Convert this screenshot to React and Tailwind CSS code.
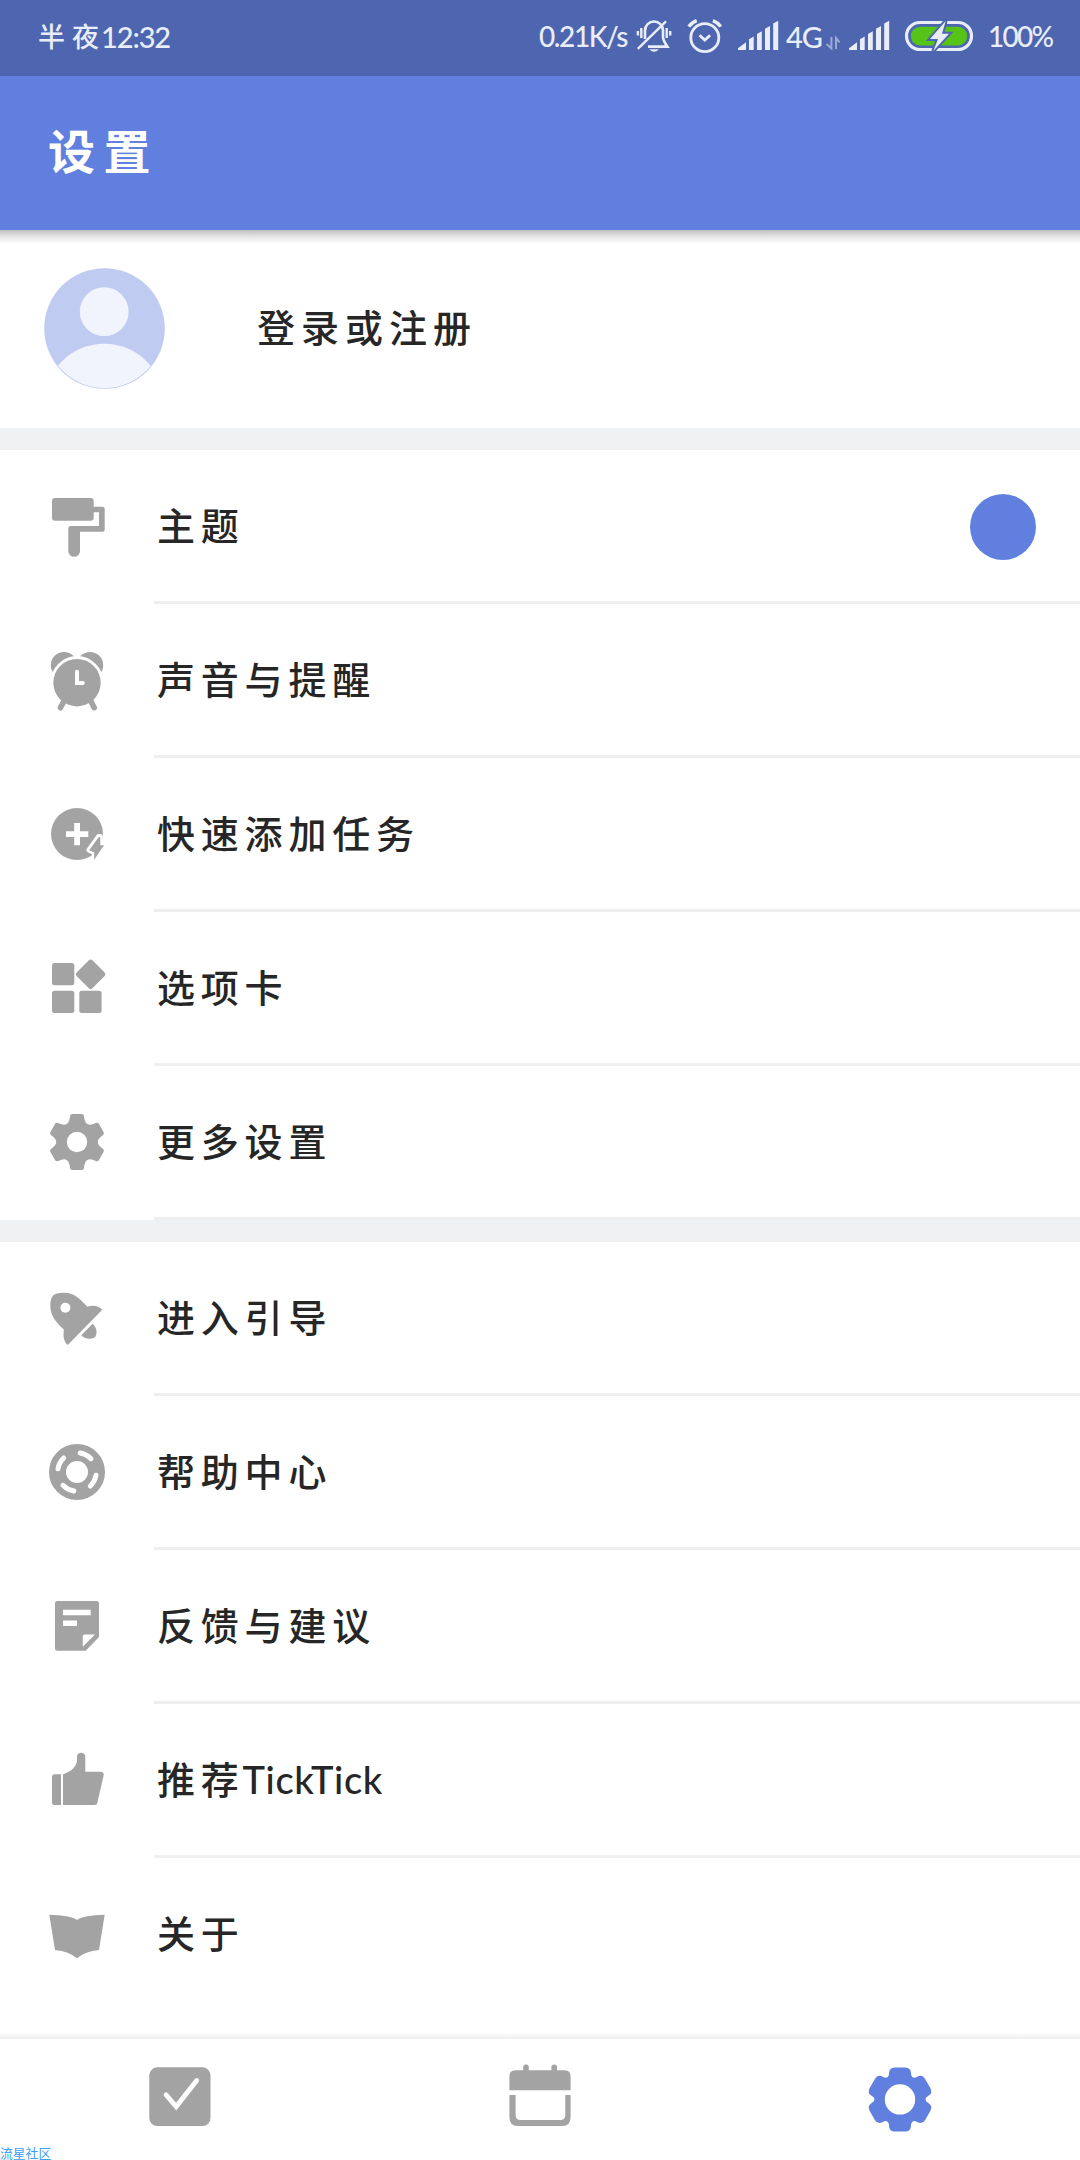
import { clsx } from 'clsx';

const SECTOR_ANGLES = [0, 60, 120, 180, 240, 300];

const RollerIcon = () => (
  <>
    <rect x="8" y="6" width="41.7" height="22.7" rx="3" />
    <path d="M49 14.7h9.7q2 0 2 2v21q0 2-2 2H36V59a5.8 5.8 0 0 1-11.7 0V36.2q0-2.2 2.2-2.2H55V20.3h-6z" />
  </>
);

const ClockIcon = () => (
  <>
    <circle cx="20" cy="19.2" r="13.2" />
    <circle cx="46" cy="19.2" r="13.2" />
    <circle cx="33" cy="36.7" r="26.6" fill="#fff" />
    <circle cx="33" cy="36.7" r="23.7" />
    <path d="M20.3 54.7L16.5 61.7M46.7 54.7L50.2 61.7" stroke="currentColor" strokeWidth="5.6" strokeLinecap="round" />
    <path d="M33 25.8V37h5.8" fill="none" stroke="#fff" strokeWidth="4" strokeLinecap="round" />
  </>
);

const QuickAddIcon = () => (
  <>
    <circle cx="33" cy="34" r="26" />
    <path d="M22 34.1h22.3M33.1 23v22.3" stroke="#fff" strokeWidth="5.8" />
    <path d="M54.7 36.5L45 50l5.3 2.5V60L60 45.3h-3.7v-8.8z" fill="#fff" stroke="#fff" strokeWidth="5" strokeLinejoin="round" />
    <path d="M54.8 37L45.2 50.2l5 2.3v7.2L60 45.3h-3.7v-8z" />
  </>
);

const TabsIcon = () => (
  <>
    <rect x="8" y="9" width="22.3" height="22.3" rx="2.5" />
    <rect x="8" y="36.7" width="22.3" height="22.3" rx="2.5" />
    <rect x="35.3" y="36.7" width="22.3" height="22.3" rx="2.5" />
    <rect x="35.5" y="9.2" width="22.3" height="22.3" rx="2.5" transform="rotate(45 46.7 20.3)" />
  </>
);

const GearIcon = () => (
  <g transform="translate(33 34)">
    {SECTOR_ANGLES.map((a) => (
      <path
        key={a}
        transform={`rotate(${a})`}
        d="M0 0L-10.35-17.9Q-7.6-19.5-7-25.8Q-6.7-28-4.8-28H4.8Q6.7-28 7-25.8Q7.6-19.5 10.35-17.9z"
      />
    ))}
    <circle r="15.3" fill="none" stroke="currentColor" strokeWidth="10.4" />
    <circle r="10.2" fill="#fff" />
  </g>
);

const RocketIcon = () => (
  <>
    <path d="M43.3 22.7C49 20.7 55 22 58.3 25.7L23.7 61C19.5 57 18.8 52 20 45.8C12 38 6.3 32 6.3 21.5C6.5 12 9.5 9 19 8.8C31 8.5 36.5 15.8 43.3 22.7z" />
    <circle cx="21.4" cy="23.8" r="5" fill="#fff" />
    <path d="M48.5 39.7C53 44 53.7 48.5 51 53.3C46.5 55.8 41 55.2 37.3 51.2z" />
  </>
);

const LifebuoyIcon = () => (
  <g transform="translate(33 34)">
    <circle r="19.5" fill="none" stroke="currentColor" strokeWidth="17" />
    {[0, 90, 180, 270].map((a) => (
      <path
        key={a}
        transform={`rotate(${a})`}
        d="M3.2-19A19.3 19.3 0 0 1 14-13.3"
        fill="none"
        stroke="#fff"
        strokeWidth="5"
        strokeLinecap="round"
      />
    ))}
  </g>
);

const NoteIcon = () => (
  <>
    <path d="M13.5 9h39q2.5 0 2.5 2.5V45L41.7 58.7H13.5q-2.5 0-2.5-2.5V11.5Q11 9 13.5 9z" />
    <path d="M19 17.7h27.7v5.5H19zM19 28.4h14V34H19zM38.7 54.7V44.5q0-2.1 2-2.1H51z" fill="#fff" />
  </>
);

const ThumbIcon = () => (
  <>
    <path d="M10.5 28.3H17V59h-6.5Q8 59 8 56.5V30.8q0-2.5 2.5-2.5z" />
    <path d="M19 59V28.5C26 25.5 33 22 33 13V10.2a4.2 4.2 0 0 1 8.3 0V25.7H56.5q3.6 0 3.2 3.3L53.3 57q-.5 2-2.5 2z" />
  </>
);

const BookIcon = () => (
  <path d="M5.3 14.7Q26 15 33 20Q40 15 60.7 14.7L55 50Q41 51.5 33 58.3Q25 51.5 11 50z" />
);

const NavCheckIcon = () => (
  <>
    <rect x="9.3" y="8.3" width="61.2" height="58.7" rx="8" />
    <path d="M26 35.7L36.2 47.6L56.7 21.5" fill="none" stroke="#fff" strokeWidth="4.8" strokeLinecap="round" />
  </>
);

const NavCalendarIcon = () => (
  <>
    <path d="M15.5 11.2h7.7V8.2a2.8 2.8 0 0 1 5.6 0v3h22.6V8.2a2.8 2.8 0 0 1 5.6 0v3h7.5q6.1 0 6.1 6v14H9.4v-14q0-6 6.1-6z" />
    <path d="M9.4 36h6.2v20q0 5 5 5h39.7q5 0 5-5V36h5.3v22q0 9-8.5 9H17.9q-8.5 0-8.5-9z" />
  </>
);

const NavGearIcon = () => (
  <g transform="translate(40 40.4)">
    {SECTOR_ANGLES.map((a) => (
      <path
        key={a}
        transform={`rotate(${a})`}
        d="M0 0L-12.75-22.1Q-11-23-11-26Q-11-32-5.2-32H5.2Q11-32 11-26Q11-23 12.75-22.1z"
      />
    ))}
    <circle r="20" fill="none" stroke="currentColor" strokeWidth="10.4" />
    <circle r="15.2" fill="#fff" />
  </g>
);

const SignalIcon = ({ className }) => (
  <svg className={clsx('shrink-0', className)} width="43" height="44" viewBox="0 0 43 44" fill="currentColor">
    <path d="M1 34.3L9 28.3V36H1.6Q1 36 1 35.4zM12 25.2l4.7-2.6V36H12zM20 20l4.8-2.7V36H20zM28 14.8l5-2.7V36h-5zM36.2 9.5l5-2.7V36h-5z" />
  </svg>
);

const StatusBar = () => (
  <div className="h-[76px] shrink-0 flex items-center bg-[#4e66b0] text-[#e9edf8] text-[29px] leading-none pl-[38px] pb-1">
    <div className="flex items-center w-[501px] font-medium">
      <span className="text-[27px] tracking-[7px]">半夜</span>
      <span className="-ml-[5px] tracking-[-1.1px]">12:32</span>
    </div>

    <span className="w-[96px] text-[28px] tracking-[-1.4px] font-medium">0.21K/s</span>

    {/* Muted bell */}
    <svg className="shrink-0" width="38" height="44" viewBox="0 0 38 44" fill="none" stroke="currentColor" strokeWidth="2.6">
      <path d="M10 25V16.5A9 9 0 0 1 28 16.5V23.5Q28.5 27 32.3 32.6H13" />
      <path d="M2.8 34.8L31 7.3M31.7 14v10M35.2 17v4.5M6.3 14v10M2.9 17v4.5" strokeWidth="2.4" />
      <path d="M14.3 35.2h9.6q-4.8 5-9.6 0z" fill="currentColor" stroke="none" />
    </svg>

    {/* Alarm */}
    <svg className="shrink-0 ml-3" width="40" height="44" viewBox="0 0 40 44" fill="none" stroke="currentColor" strokeWidth="2.8">
      <circle cx="19.8" cy="23.7" r="14" />
      <path d="M14.5 21.2l5.3 4.9 5.3-4.9" />
      <path d="M3.8 12.6Q6.5 8.5 11.7 6.6M27.9 6.6Q33 8.5 35.8 12.6" strokeWidth="3.4" />
    </svg>

    <SignalIcon className="ml-3" />
    <span className="ml-[6px] w-[39px] tracking-[-1px] font-medium">4G</span>
    <svg className="shrink-0 opacity-50" width="16" height="44" viewBox="0 0 16 44" fill="none" stroke="currentColor" strokeWidth="2">
      <path d="M6.4 23v11.5L1.6 30M11 35V24l3.6 4.4" />
    </svg>
    <SignalIcon className="ml-[7px]" />

    {/* Charging battery */}
    <svg className="shrink-0 ml-[13px]" width="70" height="44" viewBox="0 0 70 44" fill="currentColor">
      <rect x="2.5" y="8.5" width="65" height="27" rx="13.5" fill="none" stroke="currentColor" strokeWidth="3.2" />
      <rect x="6.8" y="12.8" width="56.4" height="18.6" rx="9.3" fill="#56c416" />
      <path d="M41.7 7L26 25h8l-4.7 12L45 19.7h-7z" fill="#4e66b0" stroke="#4e66b0" strokeWidth="4" />
      <path d="M41.7 7L26 25h8l-4.7 12L45 19.7h-7z" />
    </svg>

    <span className="ml-[14px] text-[28px] tracking-[-1.7px] font-medium">100%</span>
  </div>
);

const accountRows = [
  { label: '主题', Icon: RollerIcon, swatch: true },
  { label: '声音与提醒', Icon: ClockIcon },
  { label: '快速添加任务', Icon: QuickAddIcon },
  { label: '选项卡', Icon: TabsIcon },
  { label: '更多设置', Icon: GearIcon },
];

const helpRows = [
  { label: '进入引导', Icon: RocketIcon },
  { label: '帮助中心', Icon: LifebuoyIcon },
  { label: '反馈与建议', Icon: NoteIcon },
  { label: '推荐', latin: 'TickTick', Icon: ThumbIcon },
  { label: '关于', Icon: BookIcon, last: true },
];

const SettingRow = ({ label, latin, Icon, swatch, last }) => (
  <div className="h-[154px] flex pl-11">
    <div className="w-[110px] h-[151px] flex items-center shrink-0">
      <svg width="66" height="67" viewBox="0 0 66 67" fill="currentColor" className="text-[#a3a3a3]">
        <Icon />
      </svg>
    </div>
    <div
      className={clsx(
        'flex-1 flex items-center justify-between border-b-[3px] pl-[3px] pr-11',
        last ? 'border-transparent' : 'border-[#efefef]'
      )}
    >
      <div className="flex items-center text-[38px] leading-none font-medium text-[#262626] pb-px">
        <span className="tracking-[5.8px]">{label}</span>
        {latin && <span className="-ml-[2px] tracking-[0.6px]">{latin}</span>}
      </div>
      {swatch && <div className="mt-[2px] size-[66px] rounded-full bg-[#617fde]" />}
    </div>
  </div>
);

const navItems = [
  { key: 'tasks', Icon: NavCheckIcon },
  { key: 'calendar', Icon: NavCalendarIcon },
  { key: 'settings', Icon: NavGearIcon, active: true },
];

export default function App() {
  return (
    <div className="relative w-[1080px] h-[2160px] flex flex-col overflow-hidden bg-white font-['Lato','Noto_Sans_CJK_SC',sans-serif]">
      <StatusBar />

      <header className="relative h-[154px] shrink-0 flex items-center bg-[#617fde] pl-[48px] pb-[4px]">
        <h1 className="text-[47px] leading-none tracking-[8.5px] font-bold text-white">设置</h1>
        <div className="absolute left-0 top-full w-full h-[14px] bg-linear-to-b from-[#c0c0c0] via-[#e6e6e6] to-white" />
      </header>

      {/* Account */}
      <div className="h-[198px] shrink-0 flex items-center pl-11 pb-px">
        <svg width="121" height="121" viewBox="0 0 122 122">
          <clipPath id="avatar">
            <circle cx="61" cy="61" r="60" />
          </clipPath>
          <circle cx="61" cy="61" r="60.8" fill="#c0cbf2" />
          <g clipPath="url(#avatar)" fill="#f1f4fd">
            <circle cx="60.7" cy="44" r="24.6" />
            <circle cx="60.7" cy="137" r="60.6" />
          </g>
        </svg>
        <span className="ml-[92px] pb-[3px] text-[38px] leading-none tracking-[6px] font-medium text-[#262626]">登录或注册</span>
      </div>

      <div className="h-[22px] shrink-0 bg-[#f0f1f3]" />
      {accountRows.map((row) => (
        <SettingRow key={row.label} {...row} />
      ))}

      <div className="h-[22px] shrink-0 bg-[#f0f1f3]" />
      {helpRows.map((row) => (
        <SettingRow key={row.label} {...row} />
      ))}

      <div className="mt-auto h-[7px] shrink-0 bg-linear-to-b from-white to-[#eeeeee]" />
      <nav className="h-[121px] shrink-0 grid grid-cols-3">
        {navItems.map(({ key, Icon, active }) => (
          <button key={key} className="flex items-center justify-center">
            <svg
              width="80"
              height="81"
              viewBox="0 0 80 81"
              fill="currentColor"
              className={active ? 'text-[#617fde]' : 'text-[#a3a3a3]'}
            >
              <Icon />
            </svg>
          </button>
        ))}
      </nav>

      <span className="absolute left-0 bottom-0 text-[12.8px] leading-[14px] text-[#3ba0f5]">流星社区</span>
    </div>
  );
}
